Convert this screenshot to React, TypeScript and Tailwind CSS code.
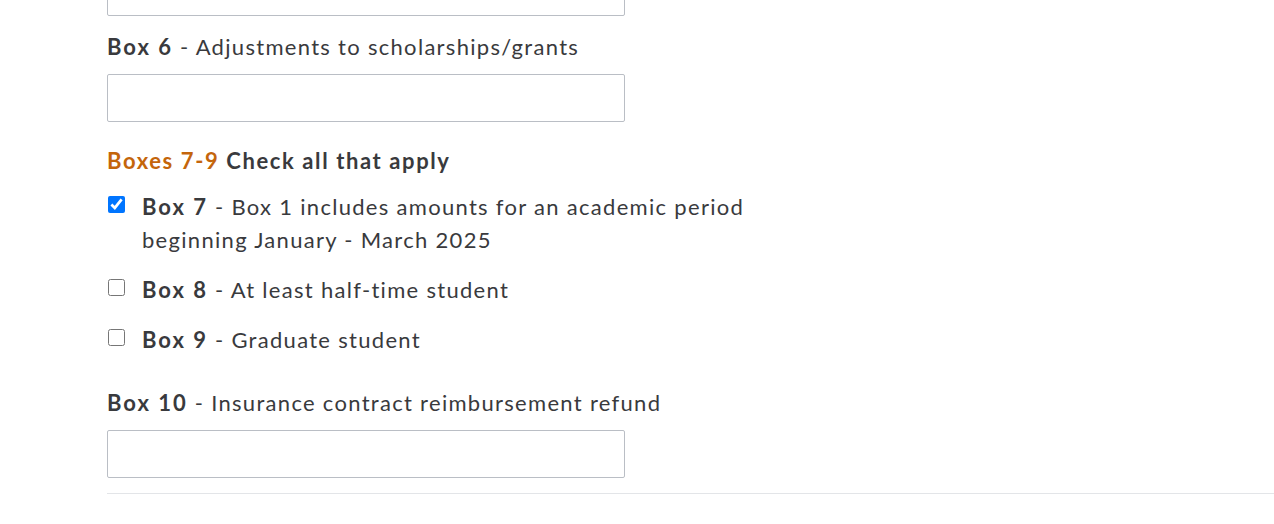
import { useState } from "react";

const font = { fontFamily: "Lato, 'Noto Sans', sans-serif" };

function TextInput({ className = "" }: { className?: string }) {
  return (
    <input
      type="text"
      className={`block w-[518px] h-[48px] border border-[#babec5] rounded-[2px] bg-white px-3 text-[20px] text-[#393a3d] outline-none ${className}`}
    />
  );
}

function BoxLabel({ box, text }: { box: string; text: string }) {
  return (
    <>
      <span className="font-bold tracking-[2px]">{box}</span> - {text}
    </>
  );
}

function CheckRow({
  box,
  label,
  checked,
  onChange,
  className = "",
}: {
  box: string;
  label: string;
  checked: boolean;
  onChange: () => void;
  className?: string;
}) {
  return (
    <label className={`flex items-start cursor-pointer ${className}`}>
      <input
        type="checkbox"
        checked={checked}
        onChange={onChange}
        className="mt-[6px] ml-[1px] w-[17px] h-[17px] shrink-0 accent-[#0075ff]"
      />
      <span className="ml-[17px] text-[22px] leading-[33px] tracking-[1.3px] w-[625px]">
        <BoxLabel box={box} text={label} />
      </span>
    </label>
  );
}

export default function App() {
  const [checks, setChecks] = useState({ b7: true, b8: false, b9: false });

  return (
    <div className="w-[1274px] h-[524px] overflow-hidden bg-white text-[#393a3d]" style={font}>
      <div className="pl-[107px]">
        {/* Box 5 input, scrolled mostly out of view */}
        <TextInput className="mt-[-32px]" />

        <div className="mt-[17px] text-[22px] leading-[28px] tracking-[1.3px]">
          <BoxLabel box="Box 6" text="Adjustments to scholarships/grants" />
        </div>
        <TextInput className="mt-[13px]" />

        <div className="mt-[25px] text-[22px] leading-[28px] tracking-[1.6px] font-bold">
          <span className="text-[#c4650b]">Boxes 7-9</span> Check all that apply
        </div>

        <CheckRow
          className="mt-[15px]"
          box="Box 7"
          label="Box 1 includes amounts for an academic period beginning January - March 2025"
          checked={checks.b7}
          onChange={() => setChecks({ ...checks, b7: !checks.b7 })}
        />
        <CheckRow
          className="mt-[17px]"
          box="Box 8"
          label="At least half-time student"
          checked={checks.b8}
          onChange={() => setChecks({ ...checks, b8: !checks.b8 })}
        />
        <CheckRow
          className="mt-[17px]"
          box="Box 9"
          label="Graduate student"
          checked={checks.b9}
          onChange={() => setChecks({ ...checks, b9: !checks.b9 })}
        />

        <div className="mt-[33px] text-[22px] leading-[28px] tracking-[1.3px]">
          <BoxLabel box="Box 10" text="Insurance contract reimbursement refund" />
        </div>
        <TextInput className="mt-[13px]" />

        <div className="mt-[15px] h-px bg-[#e3e5e8]" />
      </div>
    </div>
  );
}
